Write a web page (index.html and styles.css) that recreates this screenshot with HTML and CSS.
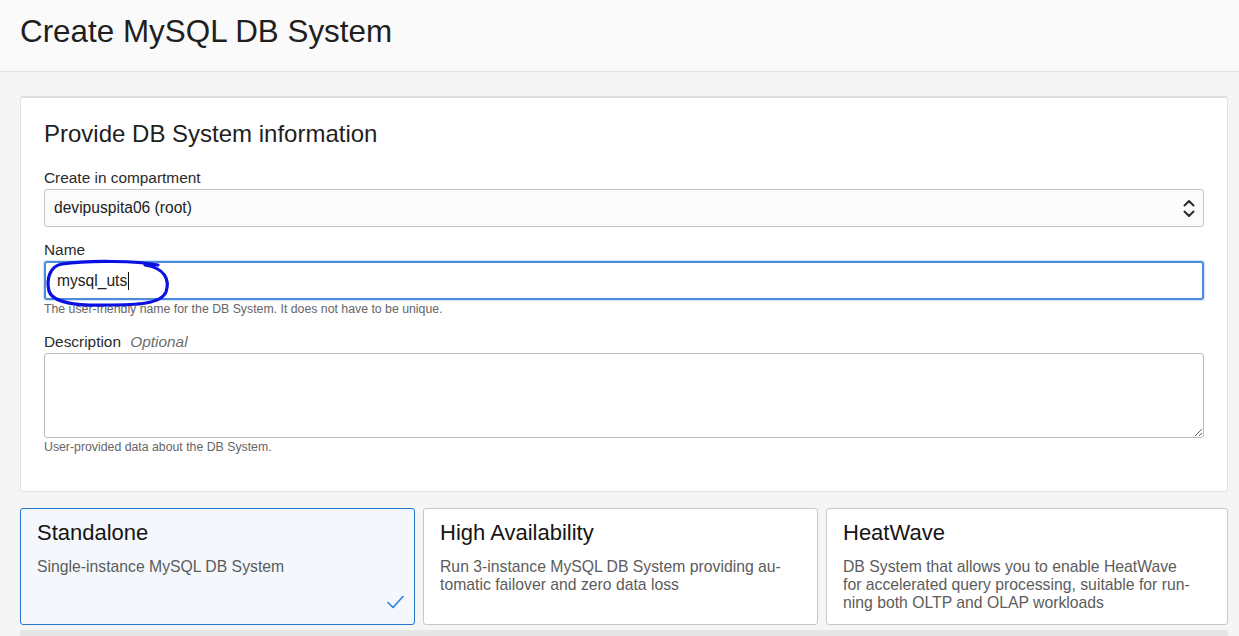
FILE: index.html
```html
<!DOCTYPE html>
<html lang="en">
<head>
<meta charset="utf-8">
<title>Create MySQL DB System</title>
<link rel="stylesheet" href="styles.css">
</head>
<body>
<header class="page-header">
  <h1 class="page-title">Create MySQL DB System</h1>
</header>
<main class="page-body">
  <section class="panel">
    <h2 class="panel-title">Provide DB System information</h2>

    <div class="field field-first">
      <div class="label">Create in compartment</div>
      <div class="select">
        <span class="select-value">devipuspita06 (root)</span>
        <svg class="select-icon" width="12" height="19" viewBox="0 0 12 19">
          <path d="M1.5 6.5 L6 2 L10.5 6.5" fill="none" stroke="#2b2b2b" stroke-width="2" stroke-linecap="round" stroke-linejoin="round"/>
          <path d="M1.5 12.5 L6 17 L10.5 12.5" fill="none" stroke="#2b2b2b" stroke-width="2" stroke-linecap="round" stroke-linejoin="round"/>
        </svg>
      </div>
    </div>

    <div class="field">
      <div class="label">Name</div>
      <div class="input-wrap">
        <div class="input focused"><span class="input-text">mysql_uts</span><span class="caret"></span></div>
        <svg class="annotation" width="140" height="52" viewBox="0 0 140 52">
          <path d="M113 4 C 92 0, 44 -1, 17 3 C 5 5, 1 18, 4 30 C 7 41, 30 45, 62 44 C 92 44, 116 43, 121 31 C 125 19, 120 7, 100 4" fill="none" stroke="#0b10df" stroke-width="3.2" stroke-linecap="round" stroke-linejoin="round"/>
        </svg>
      </div>
      <div class="help">The user-friendly name for the DB System. It does not have to be unique.</div>
    </div>

    <div class="field field-desc">
      <div class="label">Description <span class="optional">Optional</span></div>
      <textarea class="textarea"></textarea>
      <div class="help">User-provided data about the DB System.</div>
    </div>
  </section>

  <section class="cards">
    <div class="card selected">
      <div class="card-title">Standalone</div>
      <div class="card-desc">Single-instance MySQL DB System</div>
      <svg class="check" width="17" height="14" viewBox="0 0 17 14">
        <path d="M1 7.5 L6 12.5 L16 1.5" fill="none" stroke="#2e7fd0" stroke-width="1.6" stroke-linecap="round" stroke-linejoin="round"/>
      </svg>
    </div>
    <div class="card">
      <div class="card-title">High Availability</div>
      <div class="card-desc">Run 3-instance MySQL DB System providing au-<br>tomatic failover and zero data loss</div>
    </div>
    <div class="card">
      <div class="card-title">HeatWave</div>
      <div class="card-desc">DB System that allows you to enable HeatWave<br>for accelerated query processing, suitable for run-<br>ning both OLTP and OLAP workloads</div>
    </div>
  </section>
  <div class="next-panel"></div>
</main>
</body>
</html>
```

FILE: styles.css
```css
html, body {
  margin: 0;
  padding: 0;
}
body {
  background: #f5f5f5;
  font-family: "Liberation Sans", Arial, sans-serif;
  color: #2a2a2a;
  overflow: hidden;
}
.page-header {
  background: #fafafa;
  height: 72px;
  border-bottom: 1px solid #e2e2e2;
  box-sizing: border-box;
  padding: 14px 20px 0;
}
.page-title {
  margin: 0;
  font-weight: normal;
  font-size: 31.4px;
  line-height: 36px;
  color: #1f1f1f;
}
.page-body {
  padding: 24px 11px 0 20px;
}
.panel {
  background: #fff;
  border: 1px solid #e3e3e3;
  border-top: 2px solid #dddddd;
  border-radius: 3px;
  padding: 22px 23px 37px;
}
.panel-title {
  margin: 0;
  font-weight: normal;
  font-size: 24px;
  line-height: 28px;
  color: #1f1f1f;
}
.field {
  margin-top: 14px;
}
.field-first {
  margin-top: 21px;
}
.field-desc {
  margin-top: 17px;
}
.label {
  font-size: 15.4px;
  line-height: 18px;
  color: #2b2b2b;
  margin-bottom: 2px;
}
.optional {
  font-style: italic;
  color: #6f6f6f;
  margin-left: 5px;
}
.select {
  height: 38px;
  box-sizing: border-box;
  border: 1px solid #c6c6c6;
  border-radius: 3px;
  background: #fbfbfb;
  display: flex;
  align-items: center;
  justify-content: space-between;
  padding: 0 8px 0 9px;
}
.select-value {
  font-size: 15.6px;
  color: #222;
}
.select-icon {
  display: block;
}
.input-wrap {
  position: relative;
}
.input {
  height: 39px;
  box-sizing: border-box;
  border: 2px solid #4b8ddb;
  border-radius: 3px;
  background: #fff;
  display: flex;
  align-items: center;
  padding: 0 11px;
  box-shadow: 0 0 1px 1px rgba(75, 141, 219, 0.25);
}
.input-text {
  font-size: 15.6px;
  color: #222;
}
.caret {
  display: inline-block;
  width: 1px;
  height: 18px;
  background: #111;
  margin-left: 1px;
}
.annotation {
  position: absolute;
  left: 1px;
  top: 0;
  overflow: visible;
  pointer-events: none;
}
.help {
  font-size: 12.3px;
  line-height: 14px;
  color: #666;
  margin-top: 2px;
}
.textarea {
  display: block;
  width: 100%;
  height: 85px;
  box-sizing: border-box;
  border: 1px solid #bdbdbd;
  border-radius: 3px;
  background: #fff;
  margin: 0;
  padding: 6px 10px;
  font-family: "Liberation Sans", Arial, sans-serif;
  font-size: 15px;
  resize: both;
}
.cards {
  display: grid;
  grid-template-columns: 395px 395px 1fr;
  gap: 8px;
  margin-top: 16px;
}
.card {
  position: relative;
  background: #fff;
  border: 1px solid #c7c8cb;
  border-radius: 3px;
  padding: 11px 16px 11px 16px;
  min-height: 117px;
  box-sizing: border-box;
}
.card.selected {
  border-color: #2277cc;
  background: #f4f8fd;
}
.card-title {
  font-size: 22px;
  line-height: 26px;
  color: #161513;
}
.card-desc {
  margin-top: 12px;
  font-size: 15.75px;
  line-height: 18px;
  color: #5c5c5c;
}
.check {
  position: absolute;
  right: 10px;
  bottom: 15px;
}
.next-panel {
  margin-top: 5px;
  height: 10px;
  background: #e6e6e6;
  border-radius: 3px 3px 0 0;
}
```
